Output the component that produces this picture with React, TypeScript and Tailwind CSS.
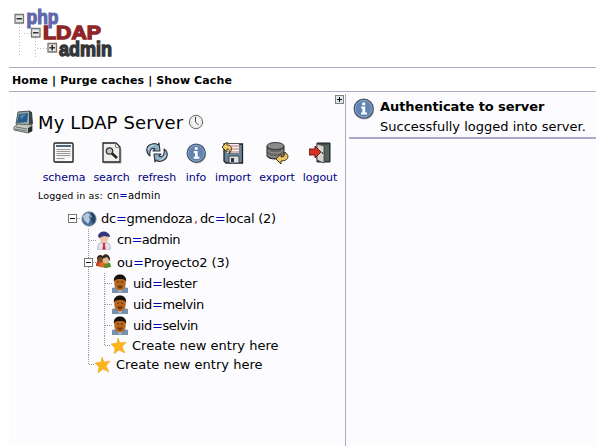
import React from "react";

const outline = "#222";

function Logo() {
  return (
    <svg width="124" height="64" viewBox="0 0 124 64" className="block">
      <g stroke="#bbb" strokeDasharray="1 2">
        <path d="M10.500 24V57M26.500 38V57M15 33.500H22M28 48.500H38" />
      </g>
      <g fontFamily="Liberation Sans, sans-serif" fontWeight="700">
        <text x="17.500" y="23.500" fontSize="19.500" textLength="32" lengthAdjust="spacingAndGlyphs" fill="#6267ae" stroke="#6267ae" strokeWidth="1.200">php</text>
        <text x="34" y="38.500" fontSize="19" textLength="58" lengthAdjust="spacingAndGlyphs" fill="#8f2529" stroke="#8f2529" strokeWidth="1.300">LDAP</text>
        <text x="50" y="55.500" fontSize="21" textLength="53" lengthAdjust="spacingAndGlyphs" fill="#343539" stroke="#343539" strokeWidth="1.400">admin</text>
      </g>
      <g fill="#e6e6e6" stroke="#777" strokeWidth="1.300">
        <path d="M6 14.500h8.500v8.500H6zM22.500 28.500h8.500v8.500h-8.500zM39 43.500h8.500v8.500H39z" />
      </g>
      <path d="M7.500 18.700H13M24 32.700h5.500M40.500 47.700H46M43.200 45v5.500" stroke="#333" strokeWidth="1.600" />
    </svg>
  );
}

function Computer() {
  return (
    <svg width="22" height="24" viewBox="0 0 22 24">
      <path d="M5 2 17 1 19 13 15 16 3 14Z" fill="#9eaaa8" stroke="#4c5657" />
      <path d="m6 4 9-1-1 9-10 1Z" fill="#245b8b" />
      <path d="m7 5 6-1-5 6Z" fill="#4d85aa" />
      <path d="m16 1 3 1 1 12-4 2Z" fill="#39444a" />
      <path d="m1 17 4-3 14 1v6l-4 2-14-3Z" fill="#c5c9bd" stroke="#636965" />
      <path d="m3 17 11 2M2 19l12 2" stroke="#697272" />
      <path d="m15 18 4-2v5l-4 2Z" fill="#222b30" />
    </svg>
  );
}

function Clock() {
  return (
    <svg width="16" height="16" viewBox="0 0 16 16">
      <circle cx="8" cy="8" r="6.700" fill="#f4f4f2" stroke="#666" />
      <circle cx="8" cy="8" r="5.200" fill="none" stroke="#aaa" strokeDasharray=".7 2" />
      <path d="M7.500 3v5l3 3" fill="none" stroke="#444" />
    </svg>
  );
}

function Info({ size = 21 }: { size?: number }) {
  return (
    <svg width={size} height={size} viewBox="0 0 22 22">
      <circle cx="11.500" cy="12" r="9.500" fill="#aaa" />
      <circle cx="10.700" cy="10.700" r="9.500" fill="#6384b1" stroke="#44536a" strokeWidth="1.300" />
      <circle cx="10.700" cy="10.700" r="8.400" fill="none" stroke="#8ba7c9" />
      <path d="M9.200 4.500h3v2.700h-3zM8.200 8.500h4v6H14v2H8v-2h1.400v-4H8.200Z" fill="#fff" />
    </svg>
  );
}

function Schema() {
  return (
    <svg width="22" height="22" viewBox="0 0 22 22">
      <path d="M2 2h19v19H2z" fill="#bbb" />
      <rect x="1" y="1" width="19" height="19" rx="1" fill="#f5f5f3" stroke={outline} strokeWidth="1.300" />
      <path d="M3 4h15" stroke="#4d6388" strokeWidth="2" />
      <path d="M3.500 7.500h14M3.500 9.500h14M3.500 11.500h14M3.500 13.500h14M3.500 16.500h8" stroke="#999" />
      <path d="M13 16h6v3h-6Z" fill="#fff" />
    </svg>
  );
}

function Search() {
  return (
    <svg width="22" height="22" viewBox="0 0 22 22">
      <path d="M3 21h17V7" fill="none" stroke="#aaa" />
      <path d="M2 1h13l4 4v15H2Z" fill="#efefeb" stroke={outline} strokeWidth="1.300" />
      <path d="M14.500 1.500v4H18" fill="#fff" stroke="#888" />
      <circle cx="8.500" cy="9" r="3.200" fill="#bfc8c9" stroke="#333" strokeWidth="1.300" />
      <path d="m11 11.500 5 4.500" stroke="#222" strokeWidth="2.600" />
    </svg>
  );
}

function Refresh() {
  return (
    <svg width="22" height="22" viewBox="0 0 22 22">
      <g fill="#8faec4" stroke="#29343c" strokeWidth="1.100" strokeLinejoin="round">
        <path d="M4 14C-1 10 0 3 6 2c3-1 5 0 6 1l1-2 1 8H7l2-2C6 5 3 8 4 14Z" />
        <path d="M18 7c5 3 4 10-2 12-3 1-5 0-6-1l-1 2-1-8h7l-2 2c3 2 6-1 5-7Z" />
      </g>
      <path d="M2.500 8c0-3 3-4.500 5-4.500M19.500 13c0 3-3 4.500-5 4.500" fill="none" stroke="#d2e1ea" />
    </svg>
  );
}

function Import() {
  return (
    <svg width="22" height="22" viewBox="0 0 22 22">
      <path d="M2 2h18.500v19H4l-2-2Z" fill="#6b8499" stroke="#222" strokeWidth="1.300" />
      <path d="M5 2h12v9H5Z" fill="#f8eeee" />
      <path d="M9 4h8M9 7h8M6 10h11" stroke="#bd7775" />
      <path d="M7 14h10v7H7Z" fill="#ddd" stroke="#394a59" />
      <path d="M9 16h3v4H9Z" fill="#333" />
      <path d="m0 5 5-5v3c5 0 6 4 2 9 1-4 0-5-2-5v3Z" fill="#efc764" stroke="#4b391b" />
    </svg>
  );
}

function Export() {
  return (
    <svg width="23" height="22" viewBox="0 0 23 22">
      <path d="M1 4v10c1 4 16 4 17 0V4" fill="#666" stroke="#222" />
      <ellipse cx="9.500" cy="4" rx="8.500" ry="3.500" fill="#8b8b8b" stroke="#333" />
      <path d="M1.500 8c2 4 14 4 16 0M1.500 12c2 4 14 4 16 0" fill="none" stroke="#999" />
      <path d="m10 17 5-5v3c3 0 4-2 4-5 6 5 2 9-4 9v3Z" fill="#edc567" stroke="#493718" />
    </svg>
  );
}

function Logout() {
  return (
    <svg width="22" height="22" viewBox="0 0 22 22">
      <path d="M8 1h13v19H8Z" fill="#414c4d" stroke="#172022" />
      <path d="m8 2 7 2v17l-7-3Z" fill="#d4d5d1" stroke="#555" />
      <path d="M16 3h4v16h-4Z" fill="#53645f" />
      <path d="M0 7h6V4l6 6-6 6v-3H0Z" fill="#d43125" stroke="#651b18" />
      <circle cx="13.500" cy="11" r="1" fill="#555" />
    </svg>
  );
}

function Globe() {
  return (
    <svg width="16" height="16" viewBox="0 0 16 16">
      <circle cx="8" cy="8" r="7.200" fill="#486f9b" stroke="#8a929a" strokeWidth=".8" />
      <path d="m2 5 4-3 3 1-1 3 1 3-2 4-4-4Z" fill="#b5cad9" />
      <path d="M10 1c5 1 6 9 2 12l-2-4Z" fill="#2b456a" />
      <path d="m9 4 2 1-1 2Z" fill="#b4c6d4" />
    </svg>
  );
}

function Admin() {
  return (
    <svg width="16" height="19" viewBox="0 0 16 19">
      <path d="M2 19c-1-5 1-8 6-8s7 3 6 8Z" fill="#e2e3ef" stroke="#999bb1" strokeWidth=".7" />
      <circle cx="8" cy="7" r="4.500" fill="#efc4a9" />
      <path d="M2 5C3-1 12-1 14 5v1L8 5 3 7Z" fill="#34357f" />
      <path d="M6.500 12h3l-.5 2 .7 4L8 19l-1.700-1 .7-4Z" fill="#cf353e" />
    </svg>
  );
}

function Group() {
  return (
    <svg width="16" height="16" viewBox="0 0 16 16">
      <path d="M0 12c0-5 2-6 5-6s5 2 5 7Z" fill="#b8432b" />
      <circle cx="4.500" cy="5" r="3.500" fill="#7b4a2b" />
      <path d="M1 5c0-5 6-5 6-1L4 3Z" fill="#28231d" />
      <path d="M3 13c0-5 1-5 4-5s5 2 5 6Z" fill="#e36824" />
      <path d="M8 14c0-7 7-8 7-1Z" fill="#548c27" />
      <circle cx="10" cy="6" r="3.500" fill="#e2ba90" />
      <path d="M6 5c0-7 9-6 8 2l-3-4Z" fill="#3a2820" />
    </svg>
  );
}

function Person() {
  return (
    <svg width="16" height="19" viewBox="0 0 16 19">
      <path d="M0 19v-5l4-1h8l4 1v5Z" fill="#7890ad" />
      <path d="m4 14 4 5 4-5Z" fill="#b7c6d5" />
      <ellipse cx="8" cy="9" rx="5.800" ry="7.500" fill="#b7661c" />
      <path d="M2 8C0-2 16-2 14 8c-1-3-3-3-6-3S3 5 2 8Z" fill="#17110d" />
      <path d="M5.500 11.500h5c0 4-5 4-5 0Z" fill="#6b3c13" />
      <path d="M5 8h2M9 8h2" stroke="#5e3513" />
    </svg>
  );
}

function Star() {
  return (
    <svg width="16" height="16" viewBox="0 0 16 16">
      <path d="m7 0 2 5 6-1-4 5 3 6-6-3-5 4 1-6-4-4 6-1Z" fill="#ffb31a" stroke="#e9a01b" strokeWidth=".5" />
    </svg>
  );
}

const tools = [
  { label: "schema", icon: <Schema />, cell: "w-[44px]" },
  { label: "search", icon: <Search />, cell: "w-[51px]" },
  { label: "refresh", icon: <Refresh />, cell: "w-[40px]" },
  { label: "info", icon: <Info />, cell: "w-[38px]" },
  { label: "import", icon: <Import />, cell: "w-[36px]" },
  { label: "export", icon: <Export />, cell: "w-[52px]" },
  { label: "logout", icon: <Logout />, cell: "w-[34px]" },
];

// Dotted guide lines and the expander to the left of one tree entry.
function Guides({ kind, height }: { kind: "root" | "leaf" | "branch" | "nested" | "nestedLast" | "last"; height: number }) {
  const mid = Math.floor(height / 2);
  const widths = { root: 13, leaf: 28, branch: 28, nested: 44, nestedLast: 43, last: 27 };
  const nested = kind === "nested" || kind === "nestedLast";
  const boxX = kind === "root" ? 0 : 16;
  return (
    <svg width={widths[kind]} height={height} className="shrink-0">
      <g stroke="#999" strokeDasharray="1 1" fill="none">
        {kind !== "root" && <path d={`M20.5 0V${kind === "last" ? mid : height}`} />}
        {nested && <path d={`M36.5 0V${kind === "nestedLast" ? mid : height}`} />}
        <path d={`M${nested ? 37 : boxX + 5} ${mid + 0.5}H${widths[kind]}`} />
      </g>
      {(kind === "root" || kind === "branch") && (
        <g stroke="#777">
          <rect x={boxX + 0.5} y={mid - 3.5} width="8" height="8" fill="#fff" />
          <path d={`M${boxX + 2} ${mid + 0.5}h5`} stroke="#111" />
        </g>
      )}
    </svg>
  );
}

const Eq = () => <span className="text-[#0000bb]">=</span>;

function Toolbar() {
  return (
    <div className="mt-[8px] ml-[33px] flex">
      {tools.map((t) => (
        <a key={t.label} className={`flex shrink-0 flex-col items-center ${t.cell}`}>
          <span className="flex h-[22px] items-center">{t.icon}</span>
          <span className="mt-[6px] text-[11px] leading-[16px] tracking-[-0.05px] whitespace-nowrap text-[#000080]">{t.label}</span>
        </a>
      ))}
    </div>
  );
}

function Tree() {
  return (
    <div className="mt-[5px] ml-[59px] text-[13px] leading-[20px] whitespace-nowrap">
      <div className="flex h-[21px] items-center">
        <Guides kind="root" height={21} />
        <Globe />
        <span className="ml-[4px] tracking-[-0.27px]">
          dc<Eq />gmendoza<span className="ml-[1.5px] text-[#dd2222]">,</span><span className="ml-[2px]">dc</span><Eq />local (2)
        </span>
      </div>
      <div className="flex h-[22px] items-center">
        <Guides kind="leaf" height={22} />
        <Admin />
        <span className="ml-[5px] tracking-[-0.5px]">cn<Eq />admin</span>
      </div>
      <div className="flex h-[22px] items-center">
        <Guides kind="branch" height={22} />
        <Group />
        <span className="ml-[5px] pt-[1px] tracking-[-0.12px]">ou<Eq />Proyecto2 (3)</span>
      </div>
      {["lester", "melvin", "selvin"].map((name) => (
        <div key={name} className="flex h-[21px] items-center">
          <Guides kind="nested" height={21} />
          <Person />
          <span className="ml-[5px] tracking-[-0.4px]">uid<Eq />{name}</span>
        </div>
      ))}
      <div className="flex h-[19px] items-center">
        <Guides kind="nestedLast" height={19} />
        <Star />
        <span className="ml-[5px] tracking-[0.02px]">Create new entry here</span>
      </div>
      <div className="flex h-[19px] items-center">
        <Guides kind="last" height={19} />
        <Star />
        <span className="ml-[5px] tracking-[0.02px]">Create new entry here</span>
      </div>
    </div>
  );
}

export default function App() {
  return (
    <div className="flex h-[446px] w-[596px] flex-col overflow-hidden bg-white pl-[9px] text-black [font-family:Verdana,'DejaVu_Sans',sans-serif]">
      <header className="h-[67px] shrink-0"><Logo /></header>
      <nav className="h-[25px] shrink-0 border-y border-[#aaaac0] pt-[1px] pl-[3px] text-[11px] leading-[23px] font-bold tracking-[0.11px] whitespace-nowrap">
        Home | Purge caches | Show Cache
      </nav>
      <main className="flex min-h-0 grow bg-[#fcfcff] pt-[2px]">
        <section className="w-[337px] shrink-0 border-r border-[#aaaac0]">
          <div className="flex h-[11px] justify-end pr-[1px]">
            <svg width="9" height="11">
              <rect x=".5" y="1.500" width="8" height="8" fill="#dfe6e8" stroke="#7b8588" />
              <path d="M2 5.500h5M4.500 3v5" stroke="#111" />
            </svg>
          </div>
          <div className="mt-[5px] ml-[4px] flex h-[24px] items-center">
            <Computer />
            <span className="ml-[3px] pt-[2px] text-[18px] leading-[24px] tracking-[0.13px] whitespace-nowrap">My LDAP Server</span>
            <span className="ml-[5px]"><Clock /></span>
          </div>
          <Toolbar />
          <div className="mt-[3px] ml-[29px] text-[10px] leading-[14px] whitespace-nowrap">
            <span className="text-[9.5px] tracking-[0.1px]">Logged in as: </span><span className="ml-[1px] tracking-[0.25px]">cn<Eq />admin</span>
          </div>
          <Tree />
        </section>
        <section className="ml-[3px] min-w-0 grow">
          <div className="flex h-[45px] border-b-2 border-[#aaaac8] pt-[4px] pl-[4px]">
            <Info size={22} />
            <div className="ml-[5px] text-[13px] leading-[20px] whitespace-nowrap">
              <div className="h-[20px] leading-[18px] font-bold tracking-[-0.07px]">Authenticate to server</div>
              <div className="leading-[18px]">Successfully logged into server.</div>
            </div>
          </div>
        </section>
      </main>
    </div>
  );
}
